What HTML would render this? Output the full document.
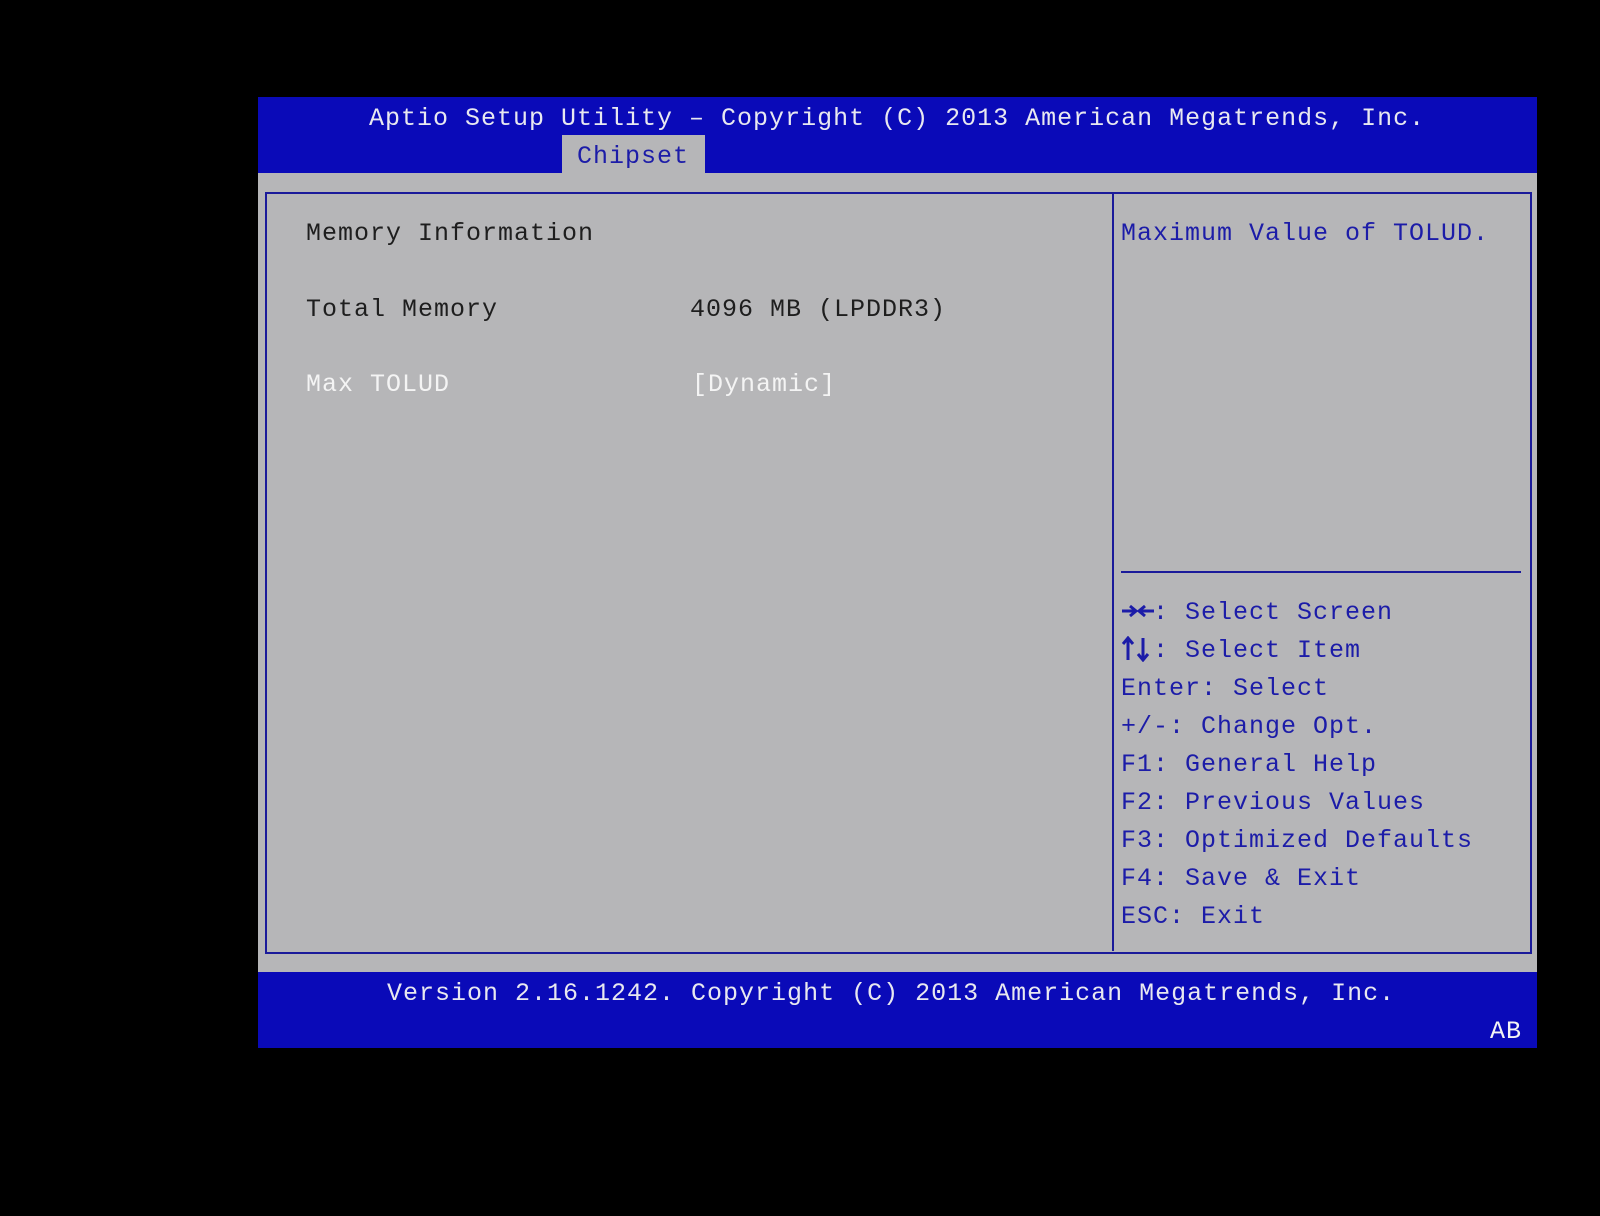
<!DOCTYPE html>
<html><head><meta charset="utf-8"><style>
html,body{margin:0;padding:0;background:#000;width:1600px;height:1216px;overflow:hidden;}
.t{position:absolute;font-family:"Liberation Mono","DejaVu Sans Mono",monospace;font-size:25px;letter-spacing:1px;line-height:38px;white-space:pre;}
.w{color:#e8e8f0}
.k{color:#1e1e1e}
.b{color:#1c1ca8}
.hw{color:#f4f4f4}
svg{position:absolute;}
</style></head><body>
<div style="position:absolute;left:258px;top:97px;width:1279px;height:951px;background:#0a0ab8;"></div>
<div style="position:absolute;left:258px;top:173px;width:1279px;height:799px;background:#b6b6b8;"></div>
<div style="position:absolute;left:562px;top:135px;width:143px;height:38px;background:#b6b6b8;"></div>
<div style="position:absolute;left:265px;top:192px;width:1263px;height:758px;border:2px solid #1a1a9a;"></div>
<div style="position:absolute;left:1112px;top:193px;width:2px;height:758px;background:#1a1a9a;"></div>
<div style="position:absolute;left:1121px;top:571px;width:400px;height:2px;background:#1a1a9a;"></div>

<div class="t w" style="left:369px;top:100px;">Aptio Setup Utility – Copyright (C) 2013 American Megatrends, Inc.</div>
<div class="t b" style="left:577px;top:138px;">Chipset</div>

<div class="t k" style="left:306px;top:215px;">Memory Information</div>
<div class="t k" style="left:306px;top:291px;">Total Memory</div>
<div class="t k" style="left:690px;top:291px;">4096 MB (LPDDR3)</div>
<div class="t hw" style="left:306px;top:366px;">Max TOLUD</div>
<div class="t hw" style="left:692px;top:366px;">[Dynamic]</div>

<div class="t b" style="left:1121px;top:215px;">Maximum Value of TOLUD.</div>
<svg style="left:1121px;top:600px" width="34" height="22" viewBox="0 0 34 22" fill="none" stroke="#1c1ca8" stroke-width="3">
<path d="M1 11H14M9 6L15 11L9 16"/><path d="M33 11H19M24 6L18 11L24 16"/></svg>
<div class="t b" style="left:1153px;top:594px;">: Select Screen</div>
<svg style="left:1121px;top:598px;top:636px" width="34" height="26" viewBox="0 0 34 26" fill="none" stroke="#1c1ca8" stroke-width="3">
<path d="M7 24V3M2 8L7 2L12 8"/><path d="M22 2V23M17 18L22 24L27 18"/></svg>
<div class="t b" style="left:1153px;top:632px;">: Select Item</div>
<div class="t b" style="left:1121px;top:670px;">Enter: Select</div>
<div class="t b" style="left:1121px;top:708px;">+/-: Change Opt.</div>
<div class="t b" style="left:1121px;top:746px;">F1: General Help</div>
<div class="t b" style="left:1121px;top:784px;">F2: Previous Values</div>
<div class="t b" style="left:1121px;top:822px;">F3: Optimized Defaults</div>
<div class="t b" style="left:1121px;top:860px;">F4: Save &amp; Exit</div>
<div class="t b" style="left:1121px;top:898px;">ESC: Exit</div>

<div class="t w" style="left:387px;top:975px;">Version 2.16.1242. Copyright (C) 2013 American Megatrends, Inc.</div>
<div class="t hw" style="left:1490px;top:1013px;">AB</div>
</body></html>
